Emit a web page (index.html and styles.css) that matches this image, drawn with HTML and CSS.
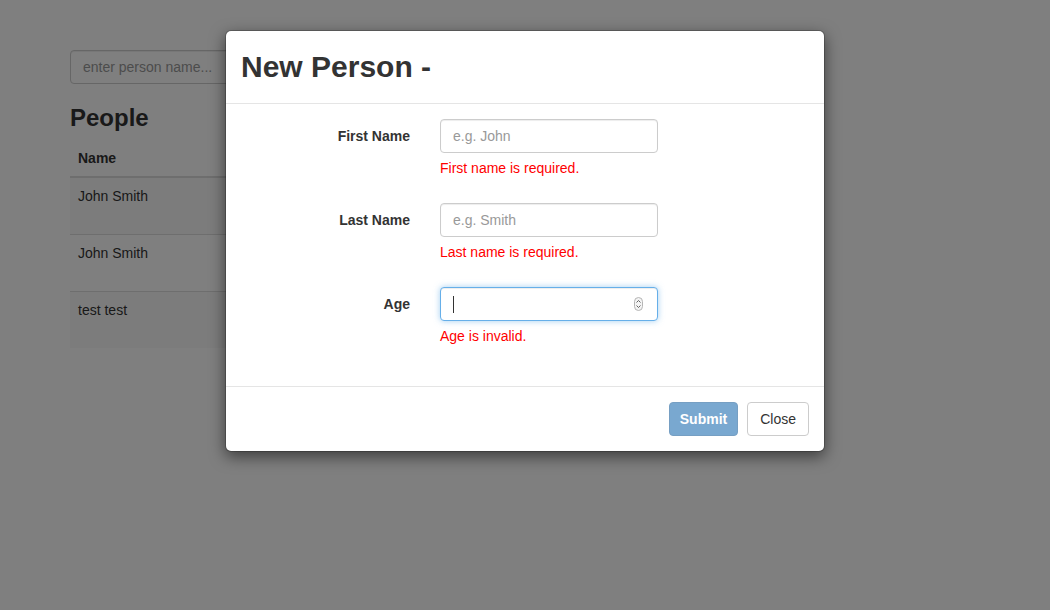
FILE: index.html
```html
<!DOCTYPE html>
<html>
<head>
<meta charset="utf-8">
<link rel="stylesheet" href="styles.css">
</head>
<body>
<div class="page">
  <input class="search" type="text" placeholder="enter person name...">
  <h3 class="heading">People</h3>
  <table class="people">
    <thead><tr><th>Name</th></tr></thead>
    <tbody>
      <tr class="odd"><td>John Smith</td></tr>
      <tr><td>John Smith</td></tr>
      <tr class="odd"><td>test test</td></tr>
    </tbody>
  </table>
</div>
<div class="backdrop"></div>
<div class="modal">
  <div class="modal-header">
    <h2 class="modal-title">New Person -</h2>
  </div>
  <div class="modal-body">
    <div class="form-group">
      <label class="label">First Name</label>
      <div class="field">
        <input class="control" type="text" placeholder="e.g. John">
        <div class="help">First name is required.</div>
      </div>
    </div>
    <div class="form-group">
      <label class="label">Last Name</label>
      <div class="field">
        <input class="control" type="text" placeholder="e.g. Smith">
        <div class="help">Last name is required.</div>
      </div>
    </div>
    <div class="form-group">
      <label class="label">Age</label>
      <div class="field">
        <div class="control focused">
          <span class="caret"></span>
          <svg class="spin" width="9" height="14" viewBox="0 0 9 14">
            <rect x="0.5" y="0.5" width="8" height="13" rx="4" fill="#f4f4f4" stroke="#b5b5b5"/>
            <path d="M2.5 5.5 L4.5 3.5 L6.5 5.5" fill="none" stroke="#555" stroke-width="0.9"/>
            <path d="M2.5 8.5 L4.5 10.5 L6.5 8.5" fill="none" stroke="#555" stroke-width="0.9"/>
          </svg>
        </div>
        <div class="help">Age is invalid.</div>
      </div>
    </div>
  </div>
  <div class="modal-footer">
    <button class="btn btn-primary" disabled>Submit</button>
    <button class="btn btn-default">Close</button>
  </div>
</div>
</body>
</html>
```

FILE: styles.css
```css
* { box-sizing: border-box; }
html, body { margin: 0; padding: 0; }
body {
  width: 1050px;
  height: 610px;
  overflow: hidden;
  background: #fff;
  font-family: "Liberation Sans", Arial, sans-serif;
  font-size: 14px;
  line-height: 20px;
  color: #333;
  position: relative;
}
.page {
  padding: 50px 0 0 70px;
}
.search {
  display: block;
  width: 300px;
  height: 34px;
  padding: 6px 12px;
  font: inherit;
  color: #555;
  border: 1px solid #ccc;
  border-radius: 4px;
  box-shadow: inset 0 1px 1px rgba(0,0,0,.075);
}
.search::placeholder { color: #999; }
.heading {
  margin: 21px 0 9px;
  font-size: 24px;
  line-height: 26.4px;
  font-weight: bold;
}
.people {
  width: 500px;
  border-collapse: collapse;
  border-spacing: 0;
}
.people th {
  text-align: left;
  padding: 8px;
  border-bottom: 2px solid #ddd;
  font-weight: bold;
}
.people td {
  padding: 8px;
  height: 57px;
  vertical-align: top;
  border-top: 1px solid #ddd;
}
.people tbody tr:first-child td { border-top: 0; }
.people tr.odd td { background: #f9f9f9; }
.backdrop {
  position: absolute;
  inset: 0;
  background: rgba(0,0,0,.5);
}
.modal {
  position: absolute;
  left: 225px;
  top: 30px;
  width: 600px;
  background: #fff;
  border: 1px solid rgba(0,0,0,.2);
  border-radius: 6px;
  box-shadow: 0 5px 15px rgba(0,0,0,.5);
  background-clip: padding-box;
}
.modal-header {
  padding: 19px 15px 20px;
  border-bottom: 1px solid #e5e5e5;
}
.modal-title {
  margin: 0;
  font-size: 30px;
  line-height: 33px;
  font-weight: bold;
  color: #333;
}
.modal-body {
  padding: 15px 0;
}
.form-group {
  display: flex;
  margin-bottom: 15px;
}
.label {
  width: 199px;
  padding: 7px 15px 0;
  text-align: right;
  font-weight: bold;
}
.field {
  width: 250px;
  padding: 0 15px;
}
.control {
  display: block;
  width: 218px;
  height: 34px;
  padding: 6px 12px;
  font: inherit;
  color: #555;
  background: #fff;
  border: 1px solid #ccc;
  border-radius: 4px;
  box-shadow: inset 0 1px 1px rgba(0,0,0,.075);
  outline: none;
}
.control::placeholder { color: #999; }
.control.focused {
  display: flex;
  align-items: center;
  justify-content: space-between;
  border-color: #66afe9;
  box-shadow: inset 0 1px 1px rgba(0,0,0,.075), 0 0 6px rgba(102,175,233,.6);
  padding: 0 14px 0 12px;
}
.caret {
  display: block;
  width: 1px;
  height: 17px;
  background: #333;
}
.spin { display: block; }
.help {
  margin: 5px 0 10px;
  color: #f00;
}
.modal-footer {
  display: flex;
  justify-content: flex-end;
  gap: 9px;
  padding: 15px;
  border-top: 1px solid #e5e5e5;
}
.btn {
  height: 34px;
  padding: 6px 12px;
  font: inherit;
  border: 1px solid transparent;
  border-radius: 4px;
}
.btn-primary {
  color: #fff;
  background: #337ab7;
  border-color: #2e6da4;
  opacity: .65;
  font-weight: bold;
  padding: 6px 10px;
}
.btn-default {
  color: #333;
  background: #fff;
  border-color: #ccc;
}
```
